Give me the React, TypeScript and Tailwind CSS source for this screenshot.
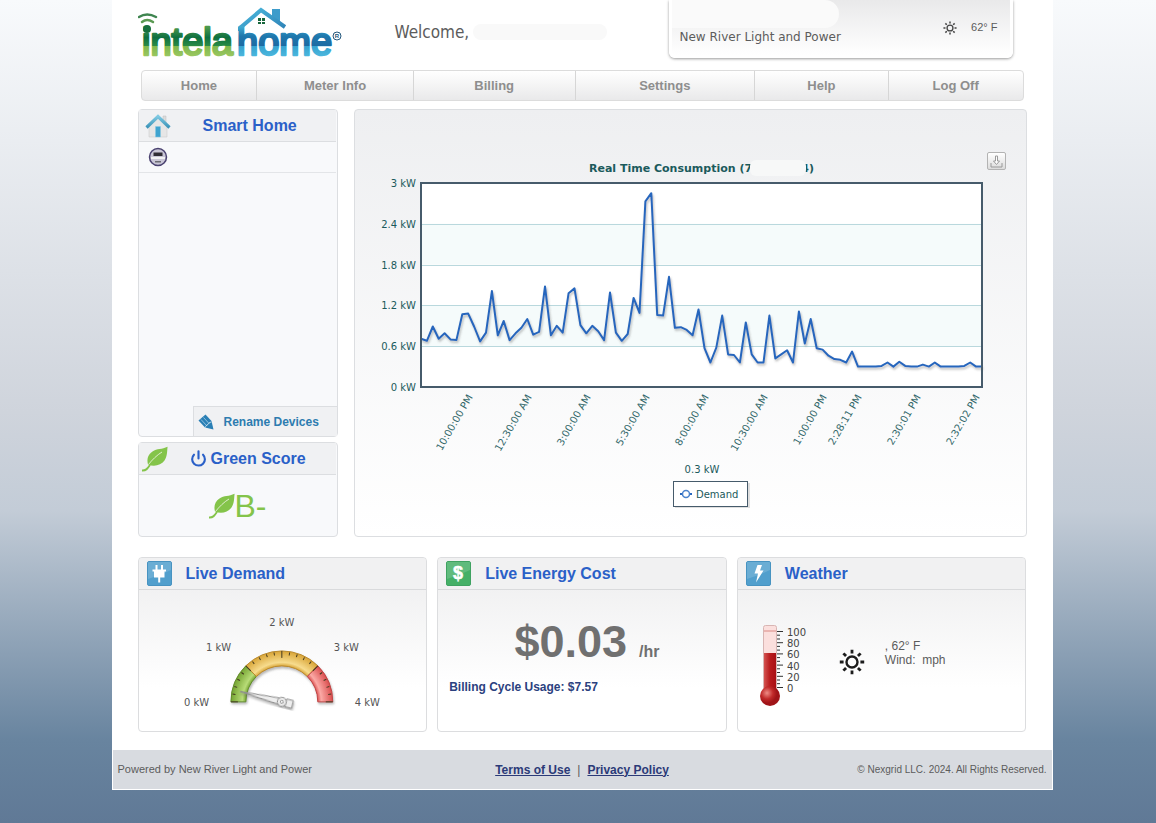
import type { ReactNode } from 'react';
import { Power } from 'lucide-react';

const NAV_ITEMS = ['Home', 'Meter Info', 'Billing', 'Settings', 'Help', 'Log Off'];

// demand readings in kW, oldest first
const DEMAND = [
    0.71, 0.68, 0.89, 0.71, 0.79, 0.7, 0.69, 1.07, 1.08, 0.89, 0.67, 0.8,
    1.41, 0.76, 0.97, 0.69, 0.79, 0.87, 1.0, 0.77, 0.81, 1.48, 0.76, 0.9,
    0.8, 1.38, 1.45, 0.91, 0.79, 0.9, 0.82, 0.69, 1.39, 0.8, 0.68, 0.78,
    1.31, 1.09, 2.73, 2.85, 1.06, 1.05, 1.62, 0.87, 0.88, 0.84, 0.76, 1.14,
    0.57, 0.36, 0.58, 1.05, 0.48, 0.47, 0.36, 0.95, 0.48, 0.36, 0.36, 1.05,
    0.42, 0.48, 0.54, 0.36, 1.11, 0.64, 1.0, 0.57, 0.55, 0.46, 0.41, 0.4,
    0.36, 0.52, 0.3, 0.3, 0.3, 0.3, 0.31, 0.36, 0.3, 0.37, 0.31, 0.3,
    0.3, 0.33, 0.3, 0.36, 0.3, 0.3, 0.3, 0.3, 0.31, 0.36, 0.3, 0.3,
];

const TIME_LABELS = [
    { x: 118, label: '10:00:00 PM' },
    { x: 177, label: '12:30:00 AM' },
    { x: 236, label: '3:00:00 AM' },
    { x: 295, label: '5:30:00 AM' },
    { x: 354, label: '8:00:00 AM' },
    { x: 413, label: '10:30:00 AM' },
    { x: 472, label: '1:00:00 PM' },
    { x: 507, label: '2:28:11 PM' },
    { x: 566, label: '2:30:01 PM' },
    { x: 625, label: '2:32:02 PM' },
];

const PLOT = { x: 66, y: 73, w: 561, h: 204, max: 3 };

function Logo() {
    return (
        <svg width="206" height="68" viewBox="0 0 206 68" role="img" aria-label="intelahome" className="shrink-0">
            <defs>
                <linearGradient id="green" gradientUnits="userSpaceOnUse" x1="0" y1="27" x2="0" y2="57">
                    <stop offset="0" stopColor="#4f9a4c" />
                    <stop offset="0.35" stopColor="#0f7040" />
                    <stop offset="0.62" stopColor="#2a8a45" />
                    <stop offset="0.63" stopColor="#7fb74c" />
                    <stop offset="1" stopColor="#9cc862" />
                </linearGradient>
                <linearGradient id="blue" gradientUnits="userSpaceOnUse" x1="0" y1="27" x2="0" y2="57">
                    <stop offset="0" stopColor="#3fa9d0" />
                    <stop offset="0.3" stopColor="#1f78ad" />
                    <stop offset="0.62" stopColor="#1c6ba3" />
                    <stop offset="0.63" stopColor="#36a3d0" />
                    <stop offset="1" stopColor="#4db8de" />
                </linearGradient>
                <linearGradient id="roof" x1="0" y1="0" x2="1" y2="1">
                    <stop offset="0" stopColor="#4bb9dd" />
                    <stop offset="1" stopColor="#2d7fb5" />
                </linearGradient>
            </defs>
            <path d="M134 9h8v16l-8-7z" fill="#3d9ccb" />
            <path d="M102 31V28L123 10L147 27" fill="none" stroke="url(#roof)" strokeWidth="4" />
            <path d="M120 18h3v3h-3zM124 18h3v3h-3zM120 22h3v2h-3zM124 22h3v2h-3z" fill="#17663c" />
            <text x="4" y="55" fontSize="38" fill="url(#green)" stroke="url(#green)" strokeWidth="2.5" strokeLinejoin="round" className="font-['Liberation_Sans',sans-serif]">intela</text>
            <text x="99" y="55" fontSize="38" fill="url(#blue)" stroke="url(#blue)" strokeWidth="2.5" strokeLinejoin="round" className="font-['Liberation_Sans',sans-serif]">home</text>
            <circle cx="9" cy="29" r="4" fill="#176f3e" />
            <path d="M1 17Q9 12 18 17" fill="none" stroke="#3f8550" strokeWidth="2.5" strokeLinecap="round" />
            <path d="M4 22Q9 18 15 22" fill="none" stroke="#5b9a52" strokeWidth="2.5" strokeLinecap="round" />
            <circle cx="199" cy="36" r="4" fill="none" stroke="#24577c" />
            <text x="199" y="38" fontSize="6" fontWeight="700" textAnchor="middle" fill="#24577c" className="font-['Liberation_Sans',sans-serif]">R</text>
        </svg>
    );
}

function SunIcon({ size, color }: { size: number; color: string }) {
    return (
        <svg width={size} height={size} viewBox="0 0 26 26" fill="none" stroke={color} className="shrink-0">
            <circle cx="13" cy="13" r="5.5" strokeWidth="2.4" />
            {[0, 45, 90, 135, 180, 225, 270, 315].map(a => (
                <path key={a} d="M13 0.8V4.6" strokeWidth="2.8" transform={`rotate(${a} 13 13)`} />
            ))}
        </svg>
    );
}

function Leaf({ size }: { size: number }) {
    return (
        <svg width={size} height={size} viewBox="0 0 26 26" className="shrink-0">
            <path d="M25.6 0.800C20 3.500 15 2.500 10.500 5.500C6 8.500 4.500 13 6 18.500C12 21 19 19.500 22.500 14.500C25.500 10 25 5 25.600 0.800z" fill="#84c44a" />
            <path d="M0 24.500c4.500.3 6-2.500 8-5.500" fill="none" stroke="#84c44a" strokeWidth="1.800" />
            <path d="M6.500 18.500C10 14 15 9 20 6" fill="none" stroke="#e6f2da" strokeWidth="0.900" />
        </svg>
    );
}

function HouseIcon() {
    return (
        <svg width="26" height="24" viewBox="0 0 26 24">
            <defs>
                <linearGradient id="houseRoof" x1="0" y1="0" x2="0" y2="1">
                    <stop offset="0" stopColor="#7fc9e2" />
                    <stop offset="1" stopColor="#3a93b8" />
                </linearGradient>
            </defs>
            <path d="M18 2h3v7h-3z" fill="#dcdcdc" stroke="#bdbdbd" strokeWidth="0.5" />
            <path d="M4 12l9-9 9 9v11H4z" fill="#e6e6e6" stroke="#c4c4c4" strokeWidth="0.5" />
            <path d="M10.500 12.500h5V23h-5z" fill="#3fa3cf" stroke="#88cbe4" strokeWidth="0.5" />
            <path d="M1.500 13.500L13 2.500l11.500 11" fill="none" stroke="url(#houseRoof)" strokeWidth="3.200" />
        </svg>
    );
}

function MeterIcon() {
    return (
        <svg width="20" height="20" viewBox="0 0 20 20">
            <circle cx="10" cy="10" r="8.500" fill="#c9c6d6" stroke="#4a4270" strokeWidth="1.500" />
            <path d="M5.500 5.500h9v3.500h-9z" fill="#302d35" />
            <path d="M3 10h14v2H3z" fill="#f1f1f3" />
            <path d="M7 14h6v1.500H7z" fill="#6b6b72" />
        </svg>
    );
}

function PencilIcon() {
    return (
        <svg width="16" height="16" viewBox="0 0 16 16">
            <path d="M0.500 6.500L7.500 0.500L13.500 7L15.500 15.500L7 13.500z" fill="#2a7fb5" />
            <path d="M3 5.500l6 6.500M5.500 3.500l6 6.500" stroke="#a8d0e6" strokeWidth="0.800" />
            <path d="M7.500 13.500c0-2 1-2 2-2.500 0-1.500 2-1.500 2-2.500l2-.5" fill="none" stroke="#d9eaf4" strokeWidth="0.800" />
        </svg>
    );
}

function Tile({ kind }: { kind: 'plug' | 'dollar' | 'bolt' }) {
    const green = kind === 'dollar';
    return (
        <svg width="25" height="25" viewBox="0 0 25 25" className="shrink-0">
            <rect x="0.5" y="0.5" width="24" height="24" rx="1.500" fill={green ? '#45b067' : '#519fcd'} stroke={green ? '#3fa261' : '#4793c1'} />
            <path d="M1 1h23v8Q14 14 1 18z" fill="#fff" opacity="0.150" />
            {kind === 'plug' && <path d="M9.500 4v5M15 4v5M5.500 9.500H19M12.200 15v6.500" stroke="#fff" strokeWidth="2" />}
            {kind === 'plug' && <path d="M7 9h10.500v7.500H7z" fill="#fff" />}
            {kind === 'dollar' && <text x="12" y="18" fontSize="18" fontWeight="700" textAnchor="middle" fill="#fff" stroke="#fff" strokeWidth="0.500" className="font-['Liberation_Sans',sans-serif]">$</text>}
            {kind === 'bolt' && <path d="M11.500 4h4.500l-2 5.500h3.500l-7.500 12 2-9H8.500z" fill="#fff" />}
        </svg>
    );
}

function ConsumptionChart() {
    const step = PLOT.w / (DEMAND.length - 1);
    const toY = (kw: number) => PLOT.y + PLOT.h - (kw / PLOT.max) * PLOT.h;
    const points = DEMAND.map((kw, i) => `${(PLOT.x + i * step).toFixed(1)},${toY(kw).toFixed(1)}`).join(' ');
    return (
        <svg viewBox="0 0 671 426" className="block w-full h-auto font-['DejaVu_Sans',Verdana,sans-serif]" fill="#1b5a5c" fontSize="10">
            <defs>
                <filter id="lineShadow" x="-5%" y="-5%" width="110%" height="115%">
                    <feDropShadow dx="1" dy="2" stdDeviation="0.800" floodColor="#555" floodOpacity="0.400" />
                </filter>
            </defs>
            <text x="234" y="62" fontSize="11" fontWeight="700">Real Time Consumption (7</text>
            <text x="459" y="62" fontSize="11" fontWeight="700" textAnchor="end">4)</text>
            <rect x="395" y="50" width="56" height="16" rx="6" fill="#f7f8f8" />

            <rect x={PLOT.x} y={PLOT.y} width={PLOT.w} height={PLOT.h} fill="#fff" />
            <rect x={PLOT.x} y={toY(2.4)} width={PLOT.w} height={PLOT.h / 5} fill="#f5fbfb" />
            <rect x={PLOT.x} y={toY(1.2)} width={PLOT.w} height={PLOT.h / 5} fill="#f5fbfb" />
            {[0.6, 1.2, 1.8, 2.4].map(kw => (
                <path key={kw} d={`M${PLOT.x} ${Math.round(toY(kw)) + 0.5}h${PLOT.w}`} stroke="#b9d8dd" />
            ))}
            {[0, 0.6, 1.2, 1.8, 2.4, 3].map(kw => (
                <text key={kw} x="61" y={Math.round(toY(kw)) + 4} textAnchor="end">{kw} kW</text>
            ))}
            <polyline points={points} fill="none" stroke="#2766bd" strokeWidth="2" strokeLinejoin="round" filter="url(#lineShadow)" />
            <rect x={PLOT.x} y={PLOT.y} width={PLOT.w} height={PLOT.h} fill="none" stroke="#465b6b" strokeWidth="2" />

            {TIME_LABELS.map(t => (
                <text key={t.label} textAnchor="end" fill="#33686a" transform={`translate(${t.x} 287) rotate(-60)`}>{t.label}</text>
            ))}

            <text x="347" y="363" textAnchor="middle">0.3 kW</text>
            <rect x="320" y="373" width="75" height="25" fill="#999" opacity="0.300" />
            <rect x="318.500" y="371.500" width="74" height="25" fill="#fff" stroke="#465b6b" />
            <path d="M325 384h12" stroke="#2766bd" strokeWidth="2" />
            <circle cx="331" cy="384" r="3.500" fill="#fff" stroke="#4b83cc" strokeWidth="1.500" />
            <text x="341" y="388">Demand</text>
        </svg>
    );
}

function arc(from: number, to: number) {
    const pt = (deg: number, r: number) => {
        const a = (deg * Math.PI) / 180;
        return `${(143 - r * Math.cos(a)).toFixed(2)} ${(112 - r * Math.sin(a)).toFixed(2)}`;
    };
    return `M${pt(from, 51)}A51 51 0 0 1 ${pt(to, 51)}L${pt(to, 36)}A36 36 0 0 0 ${pt(from, 36)}z`;
}

function DemandGauge() {
    return (
        <svg viewBox="0 0 288 141" className="block w-full h-auto font-['DejaVu_Sans',Verdana,sans-serif]" fill="#555" fontSize="10">
            <defs>
                {[
                    ['gaugeGreen', '#6f9f2c', '#b8dc78'],
                    ['gaugeYellow', '#d6a02f', '#f7dc8e'],
                    ['gaugeRed', '#d84747', '#fbaaa6'],
                ].map(([id, dark, light]) => (
                    <radialGradient key={id} id={id} gradientUnits="userSpaceOnUse" cx="143" cy="112" r="52">
                        <stop offset="0.680" stopColor={dark} />
                        <stop offset="0.760" stopColor={light} />
                        <stop offset="1" stopColor={dark} />
                    </radialGradient>
                ))}
                <filter id="gaugeShadow">
                    <feDropShadow dx="1" dy="2" stdDeviation="1.200" floodColor="#666" floodOpacity="0.450" />
                </filter>
            </defs>
            <g filter="url(#gaugeShadow)">
                <path d={arc(0, 45)} fill="url(#gaugeGreen)" stroke="#628c2a" />
                <path d={arc(45, 135)} fill="url(#gaugeYellow)" stroke="#b98a2e" />
                <path d={arc(135, 180)} fill="url(#gaugeRed)" stroke="#c04545" />
            </g>
            {Array.from({ length: 21 }, (_, i) => (
                <path key={i} d={i % 5 === 0 ? 'M92 112h7' : 'M93 112h3'} stroke="#43391f" transform={`rotate(${i * 9} 143 112)`} />
            ))}
            <g transform="rotate(14 143 112)" fill="#eee" stroke="#8b8b8b" filter="url(#gaugeShadow)">
                <path d="M100 112L144 108.500V115.500z" />
                <path d="M147 108h7v8h-7z" />
                <circle cx="143" cy="112" r="4.500" />
                <circle cx="143" cy="112" r="1.500" fill="#fff" />
            </g>
            <text x="45" y="116">0 kW</text>
            <text x="67" y="61">1 kW</text>
            <text x="143" y="36" textAnchor="middle">2 kW</text>
            <text x="195" y="61">3 kW</text>
            <text x="216" y="116">4 kW</text>
        </svg>
    );
}

function Thermometer() {
    return (
        <svg width="52" height="86" viewBox="0 0 52 86" className="shrink-0 font-['DejaVu_Sans',Verdana,sans-serif]" fill="#444" fontSize="10">
            <defs>
                <linearGradient id="mercury" x1="0" x2="1">
                    <stop offset="0" stopColor="#d45350" />
                    <stop offset="0.500" stopColor="#b81b1d" />
                    <stop offset="1" stopColor="#a90f14" />
                </linearGradient>
                <radialGradient id="bulb" cx="0.350" cy="0.350">
                    <stop offset="0" stopColor="#ee8c86" />
                    <stop offset="0.600" stopColor="#c12a2a" />
                    <stop offset="1" stopColor="#a01418" />
                </radialGradient>
            </defs>
            <rect x="4.500" y="1.500" width="13" height="70" rx="2" fill="#fbdfdd" stroke="#d8b5b3" />
            <path d="M5 7h12" stroke="#d98984" />
            <rect x="5" y="29" width="12" height="42" fill="url(#mercury)" />
            <circle cx="11" cy="72" r="10" fill="url(#bulb)" />
            {Array.from({ length: 16 }, (_, i) => (
                <path key={i} d={`M18 ${(7.5 + i * 3.73).toFixed(1)}h${i % 3 === 0 ? 6 : 3}`} stroke="#333" />
            ))}
            {[100, 80, 60, 40, 20, 0].map((t, i) => (
                <text key={t} x="28" y={12 + Math.round(i * 11.2)}>{t}</text>
            ))}
        </svg>
    );
}

function Card({ icon, title, children }: { icon: ReactNode; title: string; children: ReactNode }) {
    return (
        <section className="h-[175px] rounded border border-[#dcdddf] bg-linear-to-b from-[#ededee] to-white to-75% overflow-hidden">
            <div className="flex items-center gap-[14px] h-8 px-2 border-b border-[#d9dadc] bg-[#f1f1f2]">
                {icon}
                <h2 className="text-base font-bold text-[#2a60c8]">{title}</h2>
            </div>
            {children}
        </section>
    );
}

export default function App() {
    return (
        <div className="min-h-screen pl-2 pb-8 bg-[linear-gradient(to_bottom,#f8fafc_0%,#cfd4dc_50%,#c3ccd7_62%,#68849f_90%,#607996_100%)] font-['Liberation_Sans',Arial,sans-serif] text-[#5c5c5c]">
            <div className="w-full max-w-[941px] mx-auto border border-t-0 border-white bg-white">
                <header className="flex items-start h-[70px] px-[25px]">
                    <Logo />
                    <div className="flex items-center gap-1 ml-[51px] mt-5 font-['DejaVu_Sans_Condensed','DejaVu_Sans',sans-serif]">
                        <p className="text-[17px] leading-6">Welcome,</p>
                        <div className="w-[134px] h-4 rounded-full bg-[#f9f9f9]" />
                    </div>
                    <div className="flex items-center h-[58px] w-[344px] ml-auto mr-[14px] pr-3 rounded-b-md border-3 border-t-0 border-white bg-linear-to-b from-[#e9e9ea] to-white bg-clip-padding shadow-[0_1px_3px_rgba(0,0,0,0.4)]">
                        <div className="self-start">
                            <div className="w-[167px] h-7 rounded-r-full bg-[#fafafa]" />
                            <p className="pl-2 text-xs leading-[18px] font-['DejaVu_Sans',Verdana,sans-serif]">New River Light and Power</p>
                        </div>
                        <div className="flex items-center gap-[14px] ml-auto text-[11px]">
                            <SunIcon size={14} color="#444" />
                            <span>62° F</span>
                        </div>
                    </div>
                </header>

                <nav className="grid grid-cols-[116fr_157fr_162fr_180fr_134fr_134fr] mx-7 h-[31px] rounded border border-[#dcdcdc] bg-linear-to-b from-white to-[#e9e9ea] divide-x divide-[#d6d6d6]">
                    {NAV_ITEMS.map(item => (
                        <a key={item} href="#" className="flex items-center justify-center text-[13px] font-bold text-[#8e8e8e]">{item}</a>
                    ))}
                </nav>

                <main className="px-[25px] pt-2 pb-[18px]">
                    <div className="grid grid-cols-[200px_1fr] gap-4">
                        <aside className="flex flex-col gap-[5px]">
                            <section className="flex flex-col flex-1 rounded border border-[#dcdee1] bg-[#f8f9fb]">
                                <div className="flex items-center h-8 mr-px pl-[6px] border-b border-[#dcdee1] bg-[#f0f1f3]">
                                    <HouseIcon />
                                    <h2 className="flex-1 pl-8 text-base font-bold text-[#2a60c8]">Smart Home</h2>
                                </div>
                                <div className="flex items-center h-[31px] mr-px pl-[9px] border-b border-[#e3e5e8]">
                                    <MeterIcon />
                                </div>
                                <button type="button" className="flex items-center gap-[10px] h-[30px] w-36 mt-auto self-end pl-1 border-l border-t border-[#dcdee1] bg-[#f0f1f3] text-xs font-bold text-[#2d7cb0]">
                                    <PencilIcon />
                                    Rename Devices
                                </button>
                            </section>
                            <section className="h-[95px] rounded border border-[#dcdee1] bg-[#f8f9fb]">
                                <div className="flex items-center h-8 mr-px pl-[3px] border-b border-[#dcdee1] bg-[#f0f1f3]">
                                    <Leaf size={26} />
                                    <h2 className="flex items-center gap-1 pl-[22px] text-base font-bold text-[#2a60c8]">
                                        <Power size={17} strokeWidth={3} />
                                        Green Score
                                    </h2>
                                </div>
                                <div className="flex items-center justify-center h-[61px] text-[32px] text-[#84c44a]">
                                    <Leaf size={26} />
                                    B-
                                </div>
                            </section>
                        </aside>

                        <section className="relative h-full rounded border border-[#dcdee1] bg-linear-to-b from-[#eeeff1] to-white">
                            <ConsumptionChart />
                            <button type="button" aria-label="Download chart" className="absolute right-5 top-[42px] flex items-center justify-center w-[19px] h-[18px] rounded-xs border border-[#b3b3b3] bg-linear-to-b from-white to-[#dcdcdc]">
                                <svg width="13" height="13" viewBox="0 0 13 13" fill="#fff" stroke="#9a9a9a">
                                    <path d="M5.500 1h2v5h2l-3 3.500-3-3.500h2z" />
                                    <path d="M1 8v4h11V8" fill="none" />
                                </svg>
                            </button>
                        </section>
                    </div>

                    <div className="grid grid-cols-3 gap-[10px] mt-5">
                        <Card icon={<Tile kind="plug" />} title="Live Demand">
                            <DemandGauge />
                        </Card>
                        <Card icon={<Tile kind="dollar" />} title="Live Energy Cost">
                            <p className="flex items-baseline justify-center gap-3 pl-[10px] pt-[27px] font-bold text-[#707070]">
                                <span className="text-[45px] leading-[50px]">$0.03</span>
                                <span className="text-base">/hr</span>
                            </p>
                            <p className="pl-[11px] pt-3 text-xs font-bold text-[#2b417e]">Billing Cycle Usage: $7.57</p>
                        </Card>
                        <Card icon={<Tile kind="bolt" />} title="Weather">
                            <div className="flex items-start pl-[21px] pt-[34px]">
                                <Thermometer />
                                <div className="ml-7 mt-[25px]">
                                    <SunIcon size={26} color="#1c1c1c" />
                                </div>
                                <div className="ml-5 mt-[15px] text-xs leading-[14px] whitespace-pre">
                                    <p>, 62° F</p>
                                    <p>Wind:  mph</p>
                                </div>
                            </div>
                        </Card>
                    </div>
                </main>

                <footer className="grid grid-cols-[1fr_auto_1fr] items-center h-[39px] px-[5px] bg-[#d8dbe0] text-[11px]">
                    <span>Powered by New River Light and Power</span>
                    <span className="text-xs">
                        <a href="#" className="font-bold text-[#2b3a78] underline">Terms of Use</a>
                        <span className="px-[7px]">|</span>
                        <a href="#" className="font-bold text-[#2b3a78] underline">Privacy Policy</a>
                    </span>
                    <span className="text-right text-[10px]">© Nexgrid LLC. 2024. All Rights Reserved.</span>
                </footer>
            </div>
        </div>
    );
}
